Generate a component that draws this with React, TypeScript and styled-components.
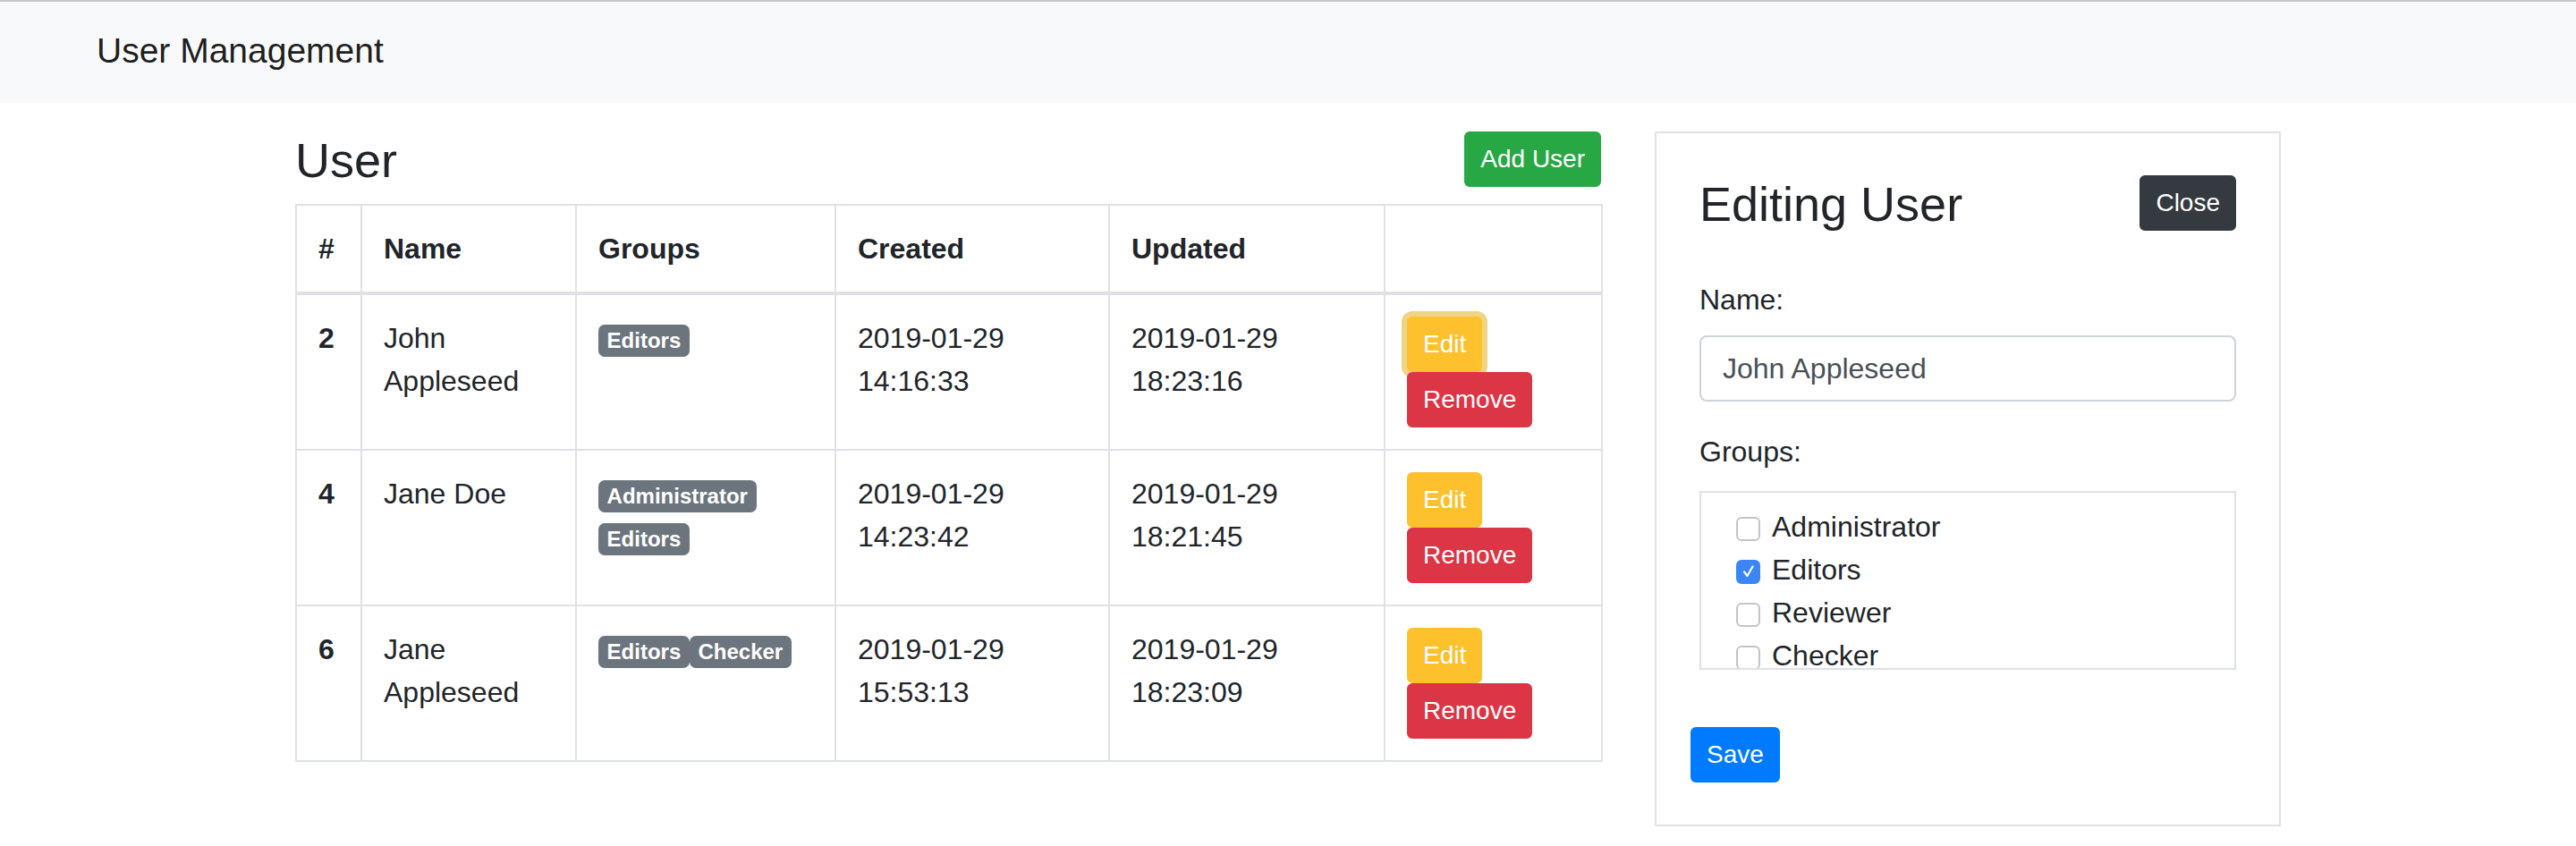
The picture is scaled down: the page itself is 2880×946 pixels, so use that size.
import React from "react";
import styled, { createGlobalStyle, css } from "styled-components";

const GlobalStyle = createGlobalStyle`
  html, body { margin: 0; padding: 0; background: #ffffff; }
  body {
    font-family: "Liberation Sans", Arial, Helvetica, sans-serif;
    color: #212529;
    font-size: 32px;
    line-height: 48px;
  }
  * { box-sizing: border-box; }
`;

const Page = styled.div`
  width: 2880px;
  min-height: 946px;
  background: #ffffff;
`;

const Navbar = styled.header`
  border-top: 2px solid #c6c6c6;
  background: #f8f9fa;
  padding: 25px 108px 28px;
`;

const Brand = styled.span`
  font-size: 39px;
  line-height: 60px;
  color: rgba(0, 0, 0, 0.9);
`;

const Container = styled.main`
  width: 2220px;
  margin: 32px auto 0;
  display: flex;
  align-items: flex-start;
  gap: 60px;
`;

const ListColumn = styled.div`
  width: 1460px;
  flex: none;
`;

const HeadingRow = styled.div`
  display: flex;
  justify-content: space-between;
  align-items: flex-start;
`;

const Title = styled.h3`
  margin: 0 0 16px;
  font-size: 54px;
  line-height: 65px;
  font-weight: 500;
  color: #212529;
`;

type Variant = "success" | "warning" | "danger" | "dark" | "primary";

const variantColors: Record<Variant, string> = {
  success: "#28a745",
  warning: "#fcc12d",
  danger: "#dc3545",
  dark: "#343a40",
  primary: "#007bff",
};

const Button = styled.button<{ $variant: Variant; $focus?: boolean; $shift?: boolean }>`
  display: inline-block;
  font-family: inherit;
  font-size: 28px;
  line-height: 42px;
  padding: 8px 16px;
  border: 2px solid ${(p) => variantColors[p.$variant]};
  background: ${(p) => variantColors[p.$variant]};
  color: #ffffff;
  border-radius: 6px;
  cursor: pointer;
  white-space: nowrap;
  ${(p) =>
    p.$focus &&
    css`
      box-shadow: 0 0 0 6px rgba(222, 170, 12, 0.5);
    `}
  ${(p) =>
    p.$shift &&
    css`
      margin-left: -10px;
    `}
`;

const Table = styled.table`
  width: 1460px;
  border-collapse: collapse;
  table-layout: fixed;
`;

const Th = styled.th<{ $w: number }>`
  width: ${(p) => p.$w}px;
  text-align: left;
  vertical-align: bottom;
  font-weight: 700;
  padding: 24px;
  border: 2px solid #dee2e6;
  border-bottom-width: 4px;
`;

const RowHead = styled.th`
  text-align: left;
  vertical-align: top;
  font-weight: 700;
  padding: 24px;
  border: 2px solid #dee2e6;
`;

const Td = styled.td`
  vertical-align: top;
  padding: 24px;
  border: 2px solid #dee2e6;
`;

const Badge = styled.span`
  display: inline-block;
  padding: 6px 9.6px;
  font-size: 24px;
  font-weight: 700;
  line-height: 1;
  color: #ffffff;
  background: #6c757d;
  border-radius: 7px;
  white-space: nowrap;
  vertical-align: baseline;
`;

const Actions = styled.div`
  display: flex;
  flex-direction: column;
  align-items: flex-start;
`;

const Card = styled.section`
  width: 700px;
  flex: none;
  border: 2px solid #dfe2e5;
  padding: 47px 48px 47px;
`;

const CardHeader = styled.div`
  display: flex;
  justify-content: space-between;
  align-items: flex-start;
  margin-bottom: 50px;
`;

const CardTitle = styled.h3`
  margin: 0;
  font-size: 54px;
  line-height: 65px;
  font-weight: 500;
`;

const FormGroup = styled.div`
  margin-bottom: 32px;
`;

const Label = styled.label`
  display: block;
  margin-bottom: 16px;
`;

const Input = styled.input`
  display: block;
  width: 100%;
  height: 74px;
  padding: 12px 24px;
  font-family: inherit;
  font-size: 32px;
  line-height: 48px;
  color: #495057;
  border: 2px solid #ced4da;
  border-radius: 8px;
  background: #ffffff;
  outline: none;
`;

const GroupBox = styled.div`
  margin-top: 20px;
  height: 200px;
  border: 2px solid #dee2e6;
  overflow: hidden;
  padding: 14px 0 0 39px;
`;

const CheckRow = styled.label`
  display: flex;
  align-items: center;
  gap: 13px;
  height: 48px;
  font-size: 32px;
  line-height: 48px;
`;

const Box = styled.span<{ $checked: boolean }>`
  width: 27px;
  height: 27px;
  margin-top: 4px;
  flex: none;
  display: flex;
  align-items: center;
  justify-content: center;
  border-radius: 6px;
  border: 2px solid ${(p) => (p.$checked ? "#3b86f6" : "#c4c4c4")};
  background: ${(p) => (p.$checked ? "#3b86f6" : "#ffffff")};
`;

const SaveRow = styled.div`
  margin-top: 64px;
`;

type User = {
  id: number;
  name: string;
  groups: string[];
  created: string;
  updated: string;
  focus?: boolean;
};

const users: User[] = [
  { id: 2, name: "John Appleseed", groups: ["Editors"], created: "2019-01-29 14:16:33", updated: "2019-01-29 18:23:16", focus: true },
  { id: 4, name: "Jane Doe", groups: ["Administrator", "Editors"], created: "2019-01-29 14:23:42", updated: "2019-01-29 18:21:45" },
  { id: 6, name: "Jane Appleseed", groups: ["Editors", "Checker"], created: "2019-01-29 15:53:13", updated: "2019-01-29 18:23:09" },
];

const groups = [
  { name: "Administrator", checked: false },
  { name: "Editors", checked: true },
  { name: "Reviewer", checked: false },
  { name: "Checker", checked: false },
];

const Check = ({ checked }: { checked: boolean }) => (
  <Box $checked={checked}>
    {checked && (
      <svg width="18" height="18" viewBox="0 0 18 18">
        <path d="M4 9.5 L7.5 14 L13.5 3.5" fill="none" stroke="#ffffff" strokeWidth="2.2" strokeLinecap="round" strokeLinejoin="round" />
      </svg>
    )}
  </Box>
);

export default function App() {
  return (
    <Page>
      <GlobalStyle />
      <Navbar>
        <Brand>User Management</Brand>
      </Navbar>
      <Container>
        <ListColumn>
          <HeadingRow>
            <Title>User</Title>
            <Button $variant="success">Add User</Button>
          </HeadingRow>
          <Table>
            <thead>
              <tr>
                <Th $w={73}>#</Th>
                <Th $w={240}>Name</Th>
                <Th $w={290}>Groups</Th>
                <Th $w={306}>Created</Th>
                <Th $w={308}>Updated</Th>
                <Th $w={243}></Th>
              </tr>
            </thead>
            <tbody>
              {users.map((u) => (
                <tr key={u.id}>
                  <RowHead>{u.id}</RowHead>
                  <Td>{u.name}</Td>
                  <Td>
                    {u.groups.map((g) => (
                      <Badge key={g}>{g}</Badge>
                    ))}
                  </Td>
                  <Td>{u.created}</Td>
                  <Td>{u.updated}</Td>
                  <Td>
                    <Actions>
                      <Button $variant="warning" $focus={u.focus}>Edit</Button>
                      <Button $variant="danger">Remove</Button>
                    </Actions>
                  </Td>
                </tr>
              ))}
            </tbody>
          </Table>
        </ListColumn>
        <Card>
          <CardHeader>
            <CardTitle>Editing User</CardTitle>
            <Button $variant="dark">Close</Button>
          </CardHeader>
          <FormGroup>
            <Label>Name:</Label>
            <Input defaultValue="John Appleseed" />
          </FormGroup>
          <div>
            <Label>Groups:</Label>
            <GroupBox>
              {groups.map((g) => (
                <CheckRow key={g.name}>
                  <Check checked={g.checked} />
                  {g.name}
                </CheckRow>
              ))}
            </GroupBox>
          </div>
          <SaveRow>
            <Button $variant="primary" $shift>Save</Button>
          </SaveRow>
        </Card>
      </Container>
    </Page>
  );
}
